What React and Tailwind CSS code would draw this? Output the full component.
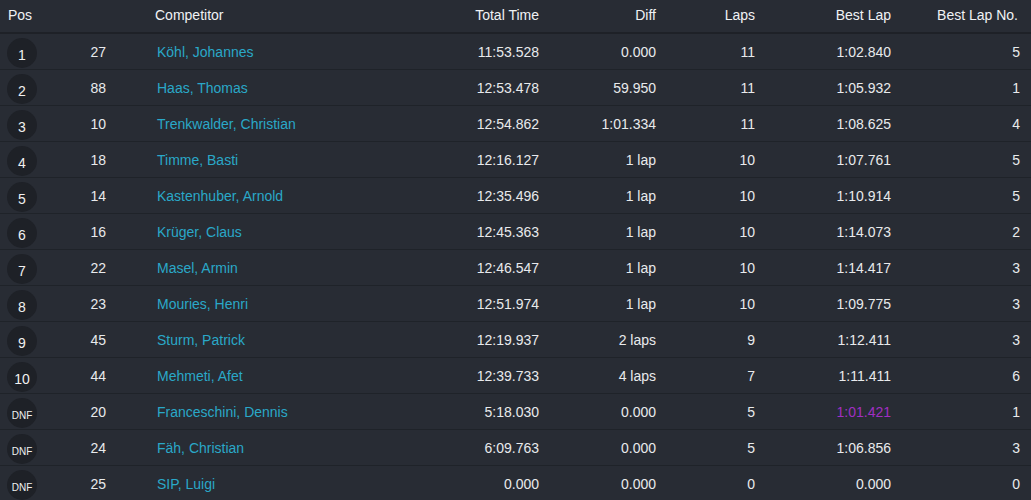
import React from 'react';

const rows = [
  ['1', '27', 'Köhl, Johannes', '11:53.528', '0.000', '11', '1:02.840', '5'],
  ['2', '88', 'Haas, Thomas', '12:53.478', '59.950', '11', '1:05.932', '1'],
  ['3', '10', 'Trenkwalder, Christian', '12:54.862', '1:01.334', '11', '1:08.625', '4'],
  ['4', '18', 'Timme, Basti', '12:16.127', '1 lap', '10', '1:07.761', '5'],
  ['5', '14', 'Kastenhuber, Arnold', '12:35.496', '1 lap', '10', '1:10.914', '5'],
  ['6', '16', 'Krüger, Claus', '12:45.363', '1 lap', '10', '1:14.073', '2'],
  ['7', '22', 'Masel, Armin', '12:46.547', '1 lap', '10', '1:14.417', '3'],
  ['8', '23', 'Mouries, Henri', '12:51.974', '1 lap', '10', '1:09.775', '3'],
  ['9', '45', 'Sturm, Patrick', '12:19.937', '2 laps', '9', '1:12.411', '3'],
  ['10', '44', 'Mehmeti, Afet', '12:39.733', '4 laps', '7', '1:11.411', '6'],
  ['DNF', '20', 'Franceschini, Dennis', '5:18.030', '0.000', '5', '1:01.421', '1', true],
  ['DNF', '24', 'Fäh, Christian', '6:09.763', '0.000', '5', '1:06.856', '3'],
  ['DNF', '25', 'SIP, Luigi', '0.000', '0.000', '0', '0.000', '0'],
];

const cols = 'grid grid-cols-[60px_46px_334px_99px_117px_99px_136px_129px] items-center';

export default function App() {
  return (
    <div className="min-h-[500px] w-full bg-[#282c34] text-[14px] text-[#e8eaec] font-['Liberation_Sans',Arial,sans-serif]">
      {/* Header */}
      <div className={`${cols} h-[34px] pb-[2px] border-b-2 border-[#1e2127] text-[#f0f2f4]`}>
        <div className="pl-[8px]">Pos</div>
        <div />
        <div className="pl-[49px]">Competitor</div>
        <div className="text-right">Total Time</div>
        <div className="text-right">Diff</div>
        <div className="text-right">Laps</div>
        <div className="text-right">Best Lap</div>
        <div className="text-right pr-[2px]">Best Lap No.</div>
      </div>

      {rows.map((r) => {
        const dnf = r[0] === 'DNF';
        return (
          <div key={r[1]} className={`${cols} h-[36px] pt-[2px] border-b border-[#1f2329]`}>
            <div className="pl-[7px]">
              <div
                className={`w-[30px] h-[30px] rounded-full bg-[#1e2127] flex items-center justify-center pt-[5px] text-[#f0f0f0] ${
                  dnf ? 'text-[10px]' : 'text-[14px]'
                }`}
              >
                {r[0]}
              </div>
            </div>
            <div className="text-right">{r[1]}</div>
            <div className="pl-[51px] text-[#2aa8c8]">{r[2]}</div>
            <div className="text-right">{r[3]}</div>
            <div className="text-right">{r[4]}</div>
            <div className="text-right">{r[5]}</div>
            <div className={`text-right ${r[8] ? 'text-[#a12fc2]' : ''}`}>{r[6]}</div>
            <div className="text-right">{r[7]}</div>
          </div>
        );
      })}
    </div>
  );
}
